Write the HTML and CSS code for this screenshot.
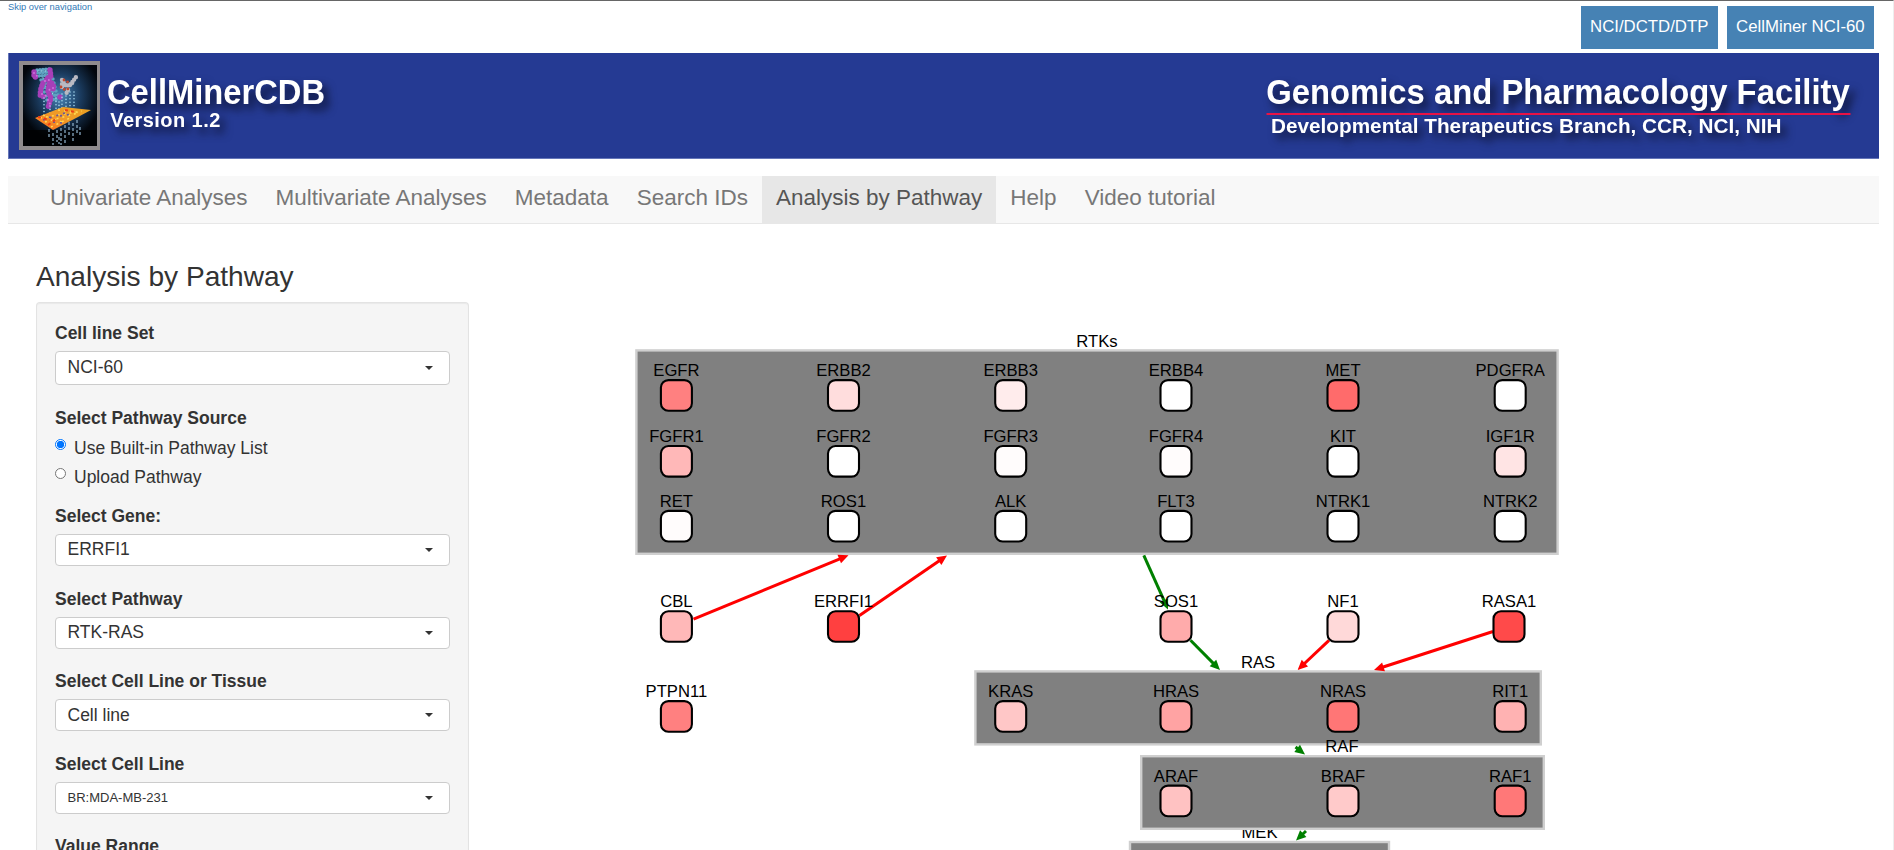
FILE: index.html
```html
<!DOCTYPE html>
<html lang="en">
<head>
<meta charset="utf-8">
<title>CellMinerCDB</title>
<link rel="stylesheet" href="styles.css">
</head>
<body>
<div class="topbar">
  <a class="skip">Skip over navigation</a>
  <div class="links"><a class="link-btn">NCI/DCTD/DTP</a><a class="link-btn">CellMiner NCI-60</a></div>
</div>
<header class="banner">
  <svg width="1871" height="106" viewBox="8 53 1871 106">
    <defs>
      <radialGradient id="glow" cx="50%" cy="38%" r="55%"><stop offset="0" stop-color="#4a86b8"/><stop offset=".5" stop-color="#1b3c60"/><stop offset="1" stop-color="#02060c"/></radialGradient>
      <linearGradient id="sheet" x1="0" y1="1" x2="1" y2="0"><stop offset="0" stop-color="#ff6a1c"/><stop offset=".5" stop-color="#f09a28"/><stop offset="1" stop-color="#e8a020"/></linearGradient>
    </defs>
    <rect x="19" y="61" width="81" height="89" fill="#8f8b8d"/>
    <rect x="23" y="65" width="74" height="81" fill="url(#glow)"/>
    <rect x="23" y="130" width="74" height="16" fill="#000" opacity=".75"/>
    <g fill="none" stroke-linecap="round">
      <path d="M37 70L50 69M37 73L50 72M39 76L52 75M41 80L53 79M42 84L54 83M43 88L55 87M44 92L56 91M46 96L58 95M47 100L58 99" stroke="#5fa3c2" stroke-width="3.6" stroke-dasharray="0 3"/>
      <path d="M38 71L48 71M43 78L50 77M45 86L53 85M49 94L56 93" stroke="#9ad6e8" stroke-width="1.6" stroke-dasharray="0 3.6"/>
      <path d="M34 72L34 77L38 77M50 70L51 76L46 79L51 82L54 87L52 91M43 83L41 88L40 95L44 97M49 85L48 92L51 98L49 104L48 108M60 97L61 100" stroke="#a63fb8" stroke-width="5.4" stroke-dasharray="0 3.2"/>
      <path d="M34 73L37 76M45 81L49 80M42 94L46 96M53 88L49 90M48 100L50 104" stroke="#cf70dc" stroke-width="2" stroke-dasharray="0 4"/>
      <path d="M62 80L66 86L71 84L76 77M62 84L62 88M68 90L66 94M70 85L73 82" stroke="#b9b9c2" stroke-width="4.4" stroke-dasharray="0 3"/>
      <path d="M61 87L65 90L70 88M64 80L68 82" stroke="#c2472e" stroke-width="2.8" stroke-dasharray="0 4"/>
      <path d="M44 98V113M50 106V116M56 98V114M62 94V114M66 96V112M70 92V110M74 92V109M59 102V114" stroke="#a6d7ef" stroke-width="1.6" stroke-dasharray="0 3.4"/>
    </g>
    <path d="M35 118L63 107L91 110L78 117L53 130Z" fill="url(#sheet)"/>
    <path d="M40 118L82 111M45 122L78 113M51 127L72 117M58 110L82 113M43 115L62 122" fill="none" stroke="#ffd552" stroke-width="1.6" stroke-dasharray="2 4"/>
    <path d="M43 120L68 112M53 122L62 123M60 116L72 114M49 117L52 118" fill="none" stroke="#6454a0" stroke-width="1.7" stroke-dasharray="2 5"/>
    <path d="M38 117L50 120M48 125L56 119M65 110L75 112" fill="none" stroke="#ed3e16" stroke-width="2" stroke-dasharray="3 3"/>
    <path d="M49 129V137M53 133V145M57 130V142M61 128V145M65 125V143M69 122V136M73 123V143M77 120V134M80 127V136M59 137V144" fill="none" stroke="#8babc4" stroke-width="1.6" stroke-dasharray="3 2" opacity=".8"/>
    <g class="banner-text">
      <text x="107" y="104" font-size="34.5" textLength="218" lengthAdjust="spacingAndGlyphs">CellMinerCDB</text>
      <text x="110.3" y="127.3" font-size="20" textLength="110">Version 1.2</text>
      <text x="1266.2" y="104.3" font-size="34.5" textLength="583.5" lengthAdjust="spacingAndGlyphs">Genomics and Pharmacology Facility</text>
      <text x="1271" y="133" font-size="20.4" textLength="510.5" lengthAdjust="spacingAndGlyphs">Developmental Therapeutics Branch, CCR, NCI, NIH</text>
    </g>
    <rect x="1266.5" y="113" width="584" height="2" fill="#e81245"/>
    <path d="M8.5 53V159M8 158.5H1879" stroke="#6576b8" fill="none"/>
  </svg>
</header>
<nav class="nav">
  <a>Univariate Analyses</a><a>Multivariate Analyses</a><a>Metadata</a><a>Search IDs</a><a class="active">Analysis by Pathway</a><a>Help</a><a>Video tutorial</a>
</nav>
<main class="main">
  <section class="side">
    <h1>Analysis by Pathway</h1>
    <form class="well">
      <div class="field tall"><label>Cell line Set</label><div class="select">NCI-60</div></div>
      <div class="radios"><label>Select Pathway Source</label>
        <div class="radio"><i class="dot on"></i>Use Built-in Pathway List</div>
        <div class="radio"><i class="dot"></i>Upload Pathway</div>
      </div>
      <div class="field"><label>Select Gene:</label><div class="select">ERRFI1</div></div>
      <div class="field"><label>Select Pathway</label><div class="select">RTK-RAS</div></div>
      <div class="field"><label>Select Cell Line or Tissue</label><div class="select low">Cell line</div></div>
      <div class="field"><label>Select Cell Line</label><div class="select small">BR:MDA-MB-231</div></div>
      <div class="field"><label class="last">Value Range</label></div>
    </form>
  </section>
  <svg class="graph" id="graph" width="1000" height="540" viewBox="600 310 1000 540"></svg>
</main>
<script src="graph.js"></script>
</body>
</html>
```
FILE: styles.css
```css
* { box-sizing: border-box; }
html { overflow: hidden; }
body {
  margin: 0; padding: 0 14px 0 8px; height: 850px; overflow: hidden;
  border-top: 1px solid #666; border-right: 1px solid #eee;
  font: 17.5px "Liberation Sans", Arial, sans-serif; color: #333; background: #fff;
}
.topbar { height: 52px; display: flex; justify-content: space-between; }
.skip { padding-top: 1px; font-size: 9.35px; line-height: 11px; color: #337ab7; }
.links { display: flex; gap: 9px; padding: 5px 5px 0 0; }
.link-btn {
  height: 43px; padding: 0 9.3px; line-height: 42px;
  font-size: 16.8px; color: #fff; background: #4682b4;
}
.banner { height: 106px; background: #253a93; }
.banner svg { display: block; }
.banner-text { fill: #fff; font-weight: bold; filter: drop-shadow(5px 6px 4px rgba(8, 12, 35, .85)); }
.nav {
  height: 48px; margin-top: 17px; padding-left: 28px; display: flex;
  background: #f8f8f8; border-bottom: 1px solid #e7e7e7;
}
.nav a { padding: 12px 14.1px; height: 47px; line-height: 20px; font-size: 22.48px; color: #777; white-space: nowrap; }
.nav .active { color: #555; background: #e7e7e7; }
.main { display: flex; padding-left: 28px; }
.side { width: 433px; flex: none; padding-top: 37px; }
h1 { margin: 0 0 9px; font-size: 28.1px; font-weight: 500; line-height: 32px; }
.well {
  height: 549px; padding: 19px 18px 0; background: #f5f5f5;
  border: 1px solid #e3e3e3; border-bottom: 0; border-radius: 4px 4px 0 0; box-shadow: inset 0 1px 1px rgba(0, 0, 0, .05);
}
label { display: block; font-weight: bold; line-height: 23px; }
.field { margin-bottom: 21.67px; }
.select {
  position: relative; height: 32px; margin-top: 6px; padding-left: 11.5px; line-height: 29px;
  border: 1px solid #ccc; border-radius: 4px; background: #fff;
}
.tall { margin-bottom: 22px; }
.tall .select { height: 34px; margin-top: 6px; line-height: 31px; }
.low { line-height: 30px; }
.small { font-size: 13px; }
.last { line-height: 21px; }
.select::after {
  content: ""; position: absolute; right: 16px; top: 50%; margin-top: -2px;
  border: 4px solid transparent; border-top-color: #333; border-bottom: 0;
}
.radios { height: 98px; }
.radios label { margin-bottom: 4px; }
.radio { display: flex; gap: 8px; height: 29.4px; line-height: 29px; }
.dot { width: 11px; height: 11px; margin-top: 5px; border: 1px solid #767676; border-radius: 50%; background: #fff; }
.dot.on { border-color: #0075ff; background: radial-gradient(circle, #0075ff 3.4px, #fff 4px); }
.graph { display: block; flex: none; margin: 86px 0 0 131px; font-size: 16.65px; }
.graph text { fill: #000; text-anchor: middle; }
.group rect { fill: #808080; stroke: #cfcfcf; stroke-width: 2.4; }
.node rect { stroke: #000; stroke-width: 2.1; }
```
FILE: graph.js
```js
const X = [676.4, 843.5, 1010.7, 1176, 1343, 1510.2];
const groups = [
  ["MEK", 1129, 841, 261, 75, 1259.5, 837.7],
  ["RTKs", 635.4, 349.4, 923.2, 205.4, 1097, 346.7],
  ["RAS", 974.4, 670.4, 567.4, 75, 1258, 667.7],
  ["RAF", 1140.2, 755.2, 404.6, 74.6, 1342, 752.3]
];
const nodes = [
  ["EGFR", X[0], 395.3, "#ff8080"], ["ERBB2", X[1], 395.3, "#ffdddd"], ["ERBB3", X[2], 395.3, "#ffecec"],
  ["ERBB4", X[3], 395.3, "#fff"], ["MET", X[4], 395.3, "#ff6b6b"], ["PDGFRA", X[5], 395.3, "#fff"],
  ["FGFR1", X[0], 461.2, "#ffb8b8"], ["FGFR2", X[1], 461.2, "#fff"], ["FGFR3", X[2], 461.2, "#fffcfc"],
  ["FGFR4", X[3], 461.2, "#fffcfc"], ["KIT", X[4], 461.2, "#fff"], ["IGF1R", X[5], 461.2, "#ffe4e4"],
  ["RET", X[0], 526.1, "#fffcfc"], ["ROS1", X[1], 526.1, "#fff"], ["ALK", X[2], 526.1, "#fff"],
  ["FLT3", X[3], 526.1, "#fff"], ["NTRK1", X[4], 526.1, "#fff"], ["NTRK2", X[5], 526.1, "#fff"],
  ["CBL", X[0], 626.4, "#ffb8b8"], ["ERRFI1", X[1], 626.4, "#ff4040"], ["SOS1", X[3], 626.4, "#ffabab"],
  ["NF1", X[4], 626.4, "#ffd9d9"], ["RASA1", 1509, 626.4, "#ff4a4a"],
  ["PTPN11", X[0], 716.3, "#ff8080"], ["KRAS", X[2], 716.3, "#ffc7c7"], ["HRAS", X[3], 716.3, "#ffa3a3"],
  ["NRAS", X[4], 716.3, "#ff7676"], ["RIT1", X[5], 716.3, "#ffb2b2"],
  ["ARAF", X[3], 800.8, "#ffc2c2"], ["BRAF", X[4], 800.8, "#ffcaca"], ["RAF1", X[5], 800.8, "#ff7878"]
];
const edges = [
  [693.5, 619.2, 848.5, 555.3, "red"], [859.5, 615.5, 947, 555.5, "red"],
  [1143.8, 555.3, 1168, 609.5, "green"], [1190.5, 640.3, 1220, 670, "green"],
  [1329, 640.3, 1297.6, 670, "red"], [1493, 631.5, 1374, 670, "red"],
  [1295.5, 747, 1305, 754.5, "green"], [1306, 831, 1296, 840.5, "green"]
];

const out = groups.map(([t, x, y, w, h, tx, ty]) =>
  `<g class="group"><text x="${tx}" y="${ty}">${t}</text><rect x="${x + 1}" y="${y + 1}" width="${w - 2}" height="${h - 2}"/></g>`);

for (const [x1, y1, x2, y2, c] of edges) {
  const len = Math.hypot(x2 - x1, y2 - y1), ux = (x2 - x1) / len, uy = (y2 - y1) / len;
  const bx = x2 - ux * 10, by = y2 - uy * 10;
  out.push(`<path d="M${x1} ${y1}L${bx + ux * 2} ${by + uy * 2}" stroke="${c}" stroke-width="3"/>` +
    `<path d="M${x2} ${y2}L${bx - uy * 4.6} ${by + ux * 4.6}L${bx + uy * 4.6} ${by - ux * 4.6}Z" fill="${c}"/>`);
}
for (const [t, x, y, c] of nodes) {
  out.push(`<g class="node"><rect x="${x - 15.5}" y="${y - 15.2}" width="31" height="30.6" rx="7.5" fill="${c}"/><text x="${x}" y="${y - 19.3}">${t}</text></g>`);
}
document.getElementById("graph").innerHTML = out.join("");
```
